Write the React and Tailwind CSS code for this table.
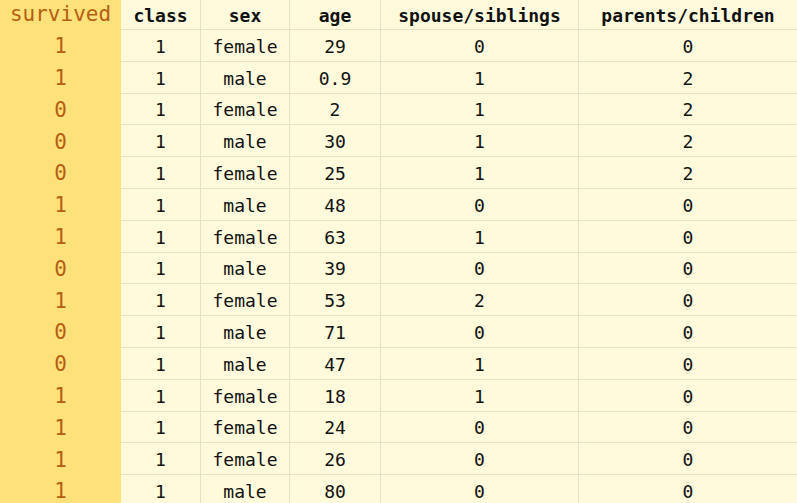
import React from "react";

const rows = [
  [1, 1, "female", 29, 0, 0],
  [1, 1, "male", 0.9, 1, 2],
  [0, 1, "female", 2, 1, 2],
  [0, 1, "male", 30, 1, 2],
  [0, 1, "female", 25, 1, 2],
  [1, 1, "male", 48, 0, 0],
  [1, 1, "female", 63, 1, 0],
  [0, 1, "male", 39, 0, 0],
  [1, 1, "female", 53, 2, 0],
  [0, 1, "male", 71, 0, 0],
  [0, 1, "male", 47, 1, 0],
  [1, 1, "female", 18, 1, 0],
  [1, 1, "female", 24, 0, 0],
  [1, 1, "female", 26, 0, 0],
  [1, 1, "male", 80, 0, 0],
];

const headers = ["class", "sex", "age", "spouse/siblings", "parents/children"];
const widths = ["w-[80px]", "w-[89px]", "w-[91px]", "w-[198px]", "flex-1"];

const App = () => {
  return (
    <div
      className="w-[797px] h-[503px] overflow-hidden bg-[#fefadb] text-[18px] text-[#111]"
      style={{ fontFamily: '"DejaVu Sans Mono", monospace' }}
    >
      {/* Header */}
      <div className="flex h-[30px]">
        <div className="w-[121px] bg-[#fde27c] text-[#b85e14] text-[21px] flex items-center justify-center">
          survived
        </div>
        {headers.map((h, i) => (
          <div
            key={h}
            className={`${widths[i]} border-b border-[#eedfc3] ${
              i < 4 ? "border-r" : ""
            } font-bold flex items-center justify-center pt-[1px]`}
          >
            {h}
          </div>
        ))}
      </div>

      {/* Body */}
      {rows.map((r, idx) => (
        <div key={idx} className="flex h-[31.8px]">
          <div className="w-[121px] bg-[#fde27c] text-[#b85e14] text-[21px] flex items-center justify-center pt-[2px]">
            {r[0]}
          </div>
          {r.slice(1).map((v, i) => (
            <div
              key={i}
              className={`${widths[i]} border-b border-[#eedfc3] ${
                i < 4 ? "border-r" : ""
              } flex items-center justify-center pt-[2px]`}
            >
              {v}
            </div>
          ))}
        </div>
      ))}
    </div>
  );
};

export default App;
